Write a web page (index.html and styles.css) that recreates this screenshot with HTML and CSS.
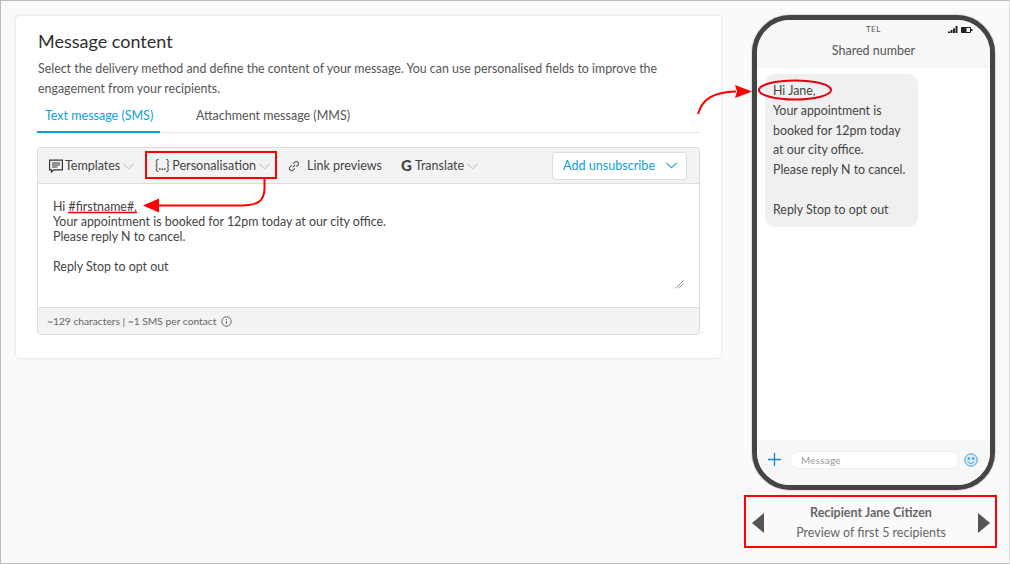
FILE: index.html
```html
<!DOCTYPE html>
<html lang="en">
<head>
<meta charset="utf-8">
<title>Message content</title>
<link rel="stylesheet" href="styles.css">
</head>
<body>
<div class="page">
  <section class="card">
    <h1 class="title">Message content</h1>
    <p class="desc">Select the delivery method and define the content of your message. You can use personalised fields to improve the engagement from your recipients.</p>
    <div class="tabs">
      <span class="tab active">Text message (SMS)</span>
      <span class="tab">Attachment message (MMS)</span>
    </div>
    <div class="editor">
      <div class="toolbar">
        <span class="tool tool-templates">
          <svg class="ico" width="14" height="14" viewBox="0 0 14 14"><path d="M.6 1.100h12.800v9.800H4.800L2.500 13v-2.100H.6z" fill="none" stroke="#333" stroke-width="1.200"/><path d="M3 4h8M3 6h8M3 8h5.500" stroke="#333" stroke-width="1"/></svg>
          Templates
          <svg class="chev" width="11" height="7" viewBox="0 0 11 7"><path d="M.5.8l5 5 5-5" fill="none" stroke="#bbb"/></svg>
        </span>
        <span class="tool tool-pers"><span class="braces">{...}</span>&nbsp;Personalisation
          <svg class="chev" width="11" height="7" viewBox="0 0 11 7"><path d="M.5.8l5 5 5-5" fill="none" stroke="#bbb"/></svg>
        </span>
        <span class="tool tool-link">
          <svg class="ico-link" width="12" height="12" viewBox="0 0 12 12"><path d="M4.800 7.200l2.400-2.400M5.300 3.700L6.900 2.100a2.100 2.100 0 0 1 3 3L8.300 6.700M6.700 8.300L5.100 9.900a2.100 2.100 0 0 1-3-3L3.700 5.300" fill="none" stroke="#555" stroke-width="1.200"/></svg>
          Link previews
        </span>
        <span class="tool tool-translate"><b class="g">G</b>Translate
          <svg class="chev" width="11" height="7" viewBox="0 0 11 7"><path d="M.5.8l5 5 5-5" fill="none" stroke="#bbb"/></svg>
        </span>
        <span class="unsub">Add unsubscribe
          <svg width="11" height="7" viewBox="0 0 11 7"><path d="M.5.800l5 5 5-5" fill="none" stroke="#1a9fdc" stroke-width="1.100"/></svg>
        </span>
      </div>
      <div class="body-text">
        <p>Hi #firstname#,</p>
        <p>Your appointment is booked for 12pm today at our city office.</p>
        <p>Please reply N to cancel.</p>
        <p class="blank">&nbsp;</p>
        <p>Reply Stop to opt out</p>
        <svg class="grip" width="9" height="9" viewBox="0 0 9 9"><path d="M8.500.5l-8 8M8.500 3.500l-5 5" stroke="#666" stroke-width="1" stroke-dasharray="1 .4"/></svg>
      </div>
      <div class="foot">~129 characters | ~1 SMS per contact
        <svg width="11" height="11" viewBox="0 0 11 11"><circle cx="5.500" cy="5.500" r="4.700" fill="none" stroke="#666"/><path d="M5.500 5v3M5.500 3v1" stroke="#666"/></svg>
      </div>
    </div>
  </section>

  <aside class="side">
    <div class="phone">
      <div class="phone-head">
        <div class="status">
          <span class="carrier">TEL</span>
          <svg class="signal" width="25" height="7" viewBox="0 0 25 7"><path d="M0 7h2V5.500H0zM2.500 7h2V4h-2zM5 7h2V2.500H5zM7.500 7h2V0h-2z" fill="#222"/><path d="M13.500 1.500h9v5h-9z" fill="none" stroke="#222"/><path d="M13.500 1.500h5v5h-5zM23 3h1.500v2H23z" fill="#222"/></svg>
        </div>
        <div class="shared">Shared number</div>
      </div>
      <div class="thread">
        <div class="bubble">Hi Jane,<br>Your appointment is booked for 12pm today at our city office.<br>Please reply N to cancel.<br><br>Reply Stop to opt out</div>
      </div>
      <div class="composer">
        <svg width="13" height="13" viewBox="0 0 13 13"><path d="M6.500 0v13M0 6.500h13" stroke="#1a7fe0" stroke-width="1.300"/></svg>
        <div class="msg-input">Message</div>
        <svg width="14" height="14" viewBox="0 0 14 14"><circle cx="7" cy="7" r="6.200" fill="#d9ecfb" stroke="#3a9be6"/><circle cx="4.800" cy="5.500" r="1.300" fill="#3a9be6"/><circle cx="9.200" cy="5.500" r="1.300" fill="#3a9be6"/><path d="M3.800 8.500c1.500 2.400 4.900 2.400 6.400 0" fill="none" stroke="#3a9be6"/></svg>
      </div>
    </div>
    <div class="recipient">
      <span class="arrow arrow-left"></span>
      <div class="rec-text">
        <div class="rec-name">Recipient Jane Citizen</div>
        <div class="rec-sub">Preview of first 5 recipients</div>
      </div>
      <span class="arrow arrow-right"></span>
    </div>
  </aside>

  <svg class="marks" width="1010" height="564" viewBox="0 0 1010 564">
    <rect x="146" y="152" width="130" height="26" fill="none" stroke="#f00" stroke-width="2"/>
    <path d="M264.500 179v9c0 14-8 17-22 17.500L158 205.500" fill="none" stroke="#f00" stroke-width="2"/>
    <path d="M143 205.500l16-7v14z" fill="#f00"/>
    <path d="M68 212.500h69" fill="none" stroke="#e00" stroke-width="1.500"/>
    <path d="M698 114c4-14 14-22 38-22.500" fill="none" stroke="#f00" stroke-width="2"/>
    <path d="M752 91.500l-17-6.500 2 6.500-2 6.500z" fill="#f00"/>
    <ellipse cx="795" cy="90" rx="36" ry="9.500" fill="none" stroke="#e60012" stroke-width="2"/>
    <rect x="745" y="496" width="251" height="51" fill="none" stroke="#f00" stroke-width="2"/>
  </svg>
</div>
</body>
</html>
```
FILE: styles.css
```css
* { box-sizing: border-box; }
html, body { margin: 0; padding: 0; }
body { font-family: Lato, "Open Sans", sans-serif; color: #444; background: #fafafa; }
p { margin: 0; }
.page {
  position: relative;
  width: 1010px;
  height: 564px;
  overflow: hidden;
  display: flex;
  align-items: flex-start;
  padding: 15px 14px 0 15px;
  border: 1px solid #bbb;
  border-right-color: #ddd;
}
.card {
  width: 705px;
  height: 342px;
  background: #fff;
  border-radius: 4px;
  box-shadow: 0 0 3px rgba(0,0,0,.16);
  padding: 14px 21px 0 21px;
  flex: none;
}
.title { margin: 0 0 0 1px; font-size: 18px; font-weight: 400; line-height: 22px; color: #2f2f2f; }
.desc { margin: 7px 0 0 1px; font-size: 12.400px; line-height: 20px; color: #555; width: 640px; }
.tabs { display: flex; border-bottom: 1px solid #e4e4e4; height: 34px; }
.tab { font-size: 12.500px; line-height: 33px; padding: 0 8px; color: #555; white-space: nowrap; }
.tab.active { width: 123px; color: #0a9fdc; border-bottom: 2px solid #00a0df; height: 34px; margin-right: 28px; }
.editor { margin-top: 14px; border: 1px solid #ddd; border-radius: 3px; overflow: hidden; height: 188px; display: flex; flex-direction: column; }
.toolbar { height: 36px; background: #f3f3f3; border-bottom: 1px solid #ddd; display: flex; align-items: center; font-size: 12.500px; color: #444; flex: none; padding-left: 11px; }
.tool { display: inline-flex; align-items: center; white-space: nowrap; }
.ico { margin-right: 2px; }
.chev { margin-left: 3px; margin-top: 1px; }
.braces { letter-spacing: -.5px; }
.tool-templates { width: 106px; }
.tool-pers { width: 133px; font-size: 12.600px; }
.tool-link { width: 113px; }
.ico-link { margin-right: 7px; }
.tool-translate { width: 151px; }
.g { font-weight: 900; margin-right: 3px; color: #444; font-size: 15px; line-height: 15px; }
.unsub {
  width: 135px; height: 28px; background: #fff; border: 1px solid #ddd; border-radius: 3px;
  display: flex; align-items: center; justify-content: space-between; padding: 0 9px 0 10px; color: #0a9fdc; font-size: 12.600px;
}
.body-text { position: relative; flex: 1; background: #fff; padding: 15px 15px 0; font-size: 12.400px; line-height: 15px; color: #444; }
.blank { height: 15px; }
.grip { position: absolute; right: 15px; bottom: 18px; }
.foot { height: 27px; flex: none; background: #f3f3f3; border-top: 1px solid #ddd; font-size: 10.250px; padding-left: 9px; color: #666; display: flex; align-items: center; gap: 5px; }
.side { margin-left: 31px; width: 243px; flex: none; display: flex; flex-direction: column; }
.phone { width: 243px; height: 475px; border: 5px solid #444; border-radius: 38px; overflow: hidden; background: #fff; display: flex; flex-direction: column; margin-top: -1px; box-shadow: 0 0 2px rgba(0,0,0,.4); }
.phone-head { height: 48px; background: #f7f7f7; flex: none; }
.status { position: relative; height: 21px; }
.carrier { position: absolute; left: 109px; top: 4px; font-size: 8px; line-height: 10px; color: #555; letter-spacing: .4px; }
.signal { position: absolute; right: 17px; top: 6px; }
.shared { text-align: center; font-size: 12.500px; line-height: 20px; color: #555; }
.thread { flex: 1; padding: 6px 0 0 8px; }
.bubble { width: 153px; height: 153px; background: #f0f0f0; border-radius: 10px; padding: 7px 8px; font-size: 12.400px; line-height: 19.800px; color: #444; }
.composer { height: 45px; background: #f7f7f7; flex: none; display: flex; align-items: center; padding: 0 11px 6px 11px; }
.msg-input { width: 169px; height: 18px; margin: 0 5px 0 9px; background: #fff; border: 1px solid #eee; border-radius: 9px; font-size: 9.800px; line-height: 17px; color: #999; padding-left: 10px; letter-spacing: .3px; }
.recipient { width: 238px; height: 52px; margin-top: 7px; display: flex; align-items: center; justify-content: space-between; }
.rec-text { text-align: center; font-size: 12.500px; line-height: 20px; color: #666; }
.rec-name { font-weight: 700; }
.arrow { width: 0; height: 0; border-top: 10px solid transparent; border-bottom: 10px solid transparent; }
.arrow-left { border-right: 12px solid #555; }
.arrow-right { border-left: 12px solid #555; }
.marks { position: absolute; left: -1px; top: -1px; pointer-events: none; }
```
